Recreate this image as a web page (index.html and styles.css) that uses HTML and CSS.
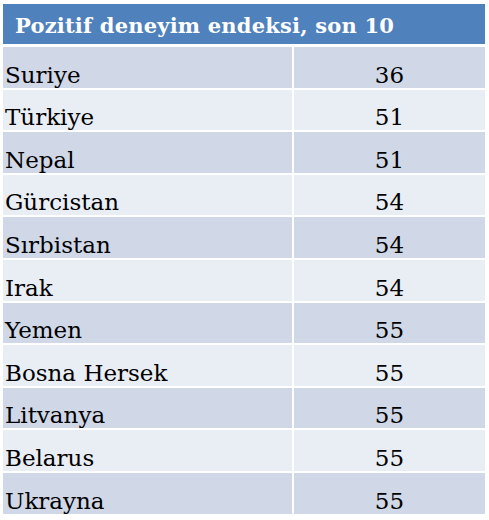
FILE: index.html
```html
<!DOCTYPE html>
<html lang="tr">
<head>
    <meta charset="UTF-8">
    <meta name="viewport" content="width=device-width, initial-scale=1.0">
    <title>Pozitif deneyim endeksi</title>
    <link rel="stylesheet" href="styles.css">
</head>
<body>
<table class="index-table">
    <colgroup>
        <col class="col-country">
        <col class="col-score">
    </colgroup>
    <thead>
        <tr>
            <th colspan="2">Pozitif deneyim endeksi, son 10</th>
        </tr>
    </thead>
    <tbody>
        <tr><td class="country">Suriye</td><td class="score">36</td></tr>
        <tr><td class="country">Türkiye</td><td class="score">51</td></tr>
        <tr><td class="country">Nepal</td><td class="score">51</td></tr>
        <tr><td class="country">Gürcistan</td><td class="score">54</td></tr>
        <tr><td class="country">Sırbistan</td><td class="score">54</td></tr>
        <tr><td class="country">Irak</td><td class="score">54</td></tr>
        <tr><td class="country">Yemen</td><td class="score">55</td></tr>
        <tr><td class="country">Bosna Hersek</td><td class="score">55</td></tr>
        <tr><td class="country">Litvanya</td><td class="score">55</td></tr>
        <tr><td class="country">Belarus</td><td class="score">55</td></tr>
        <tr><td class="country">Ukrayna</td><td class="score">55</td></tr>
    </tbody>
</table>
</body>
</html>
```

FILE: styles.css
```css
body {
    margin: 0;
    padding: 4px 0 0 3px;
    background-color: #fff;
    font-family: "DejaVu Serif", "Liberation Serif", serif;
}
.index-table {
    width: 482px;
    border-collapse: separate;
    border-spacing: 0;
    table-layout: fixed;
}
.col-country {
    width: 291px;
}
.col-score {
    width: 191px;
}
.index-table th {
    height: 41px;
    padding: 11px 0 0 12px;
    box-sizing: border-box;
    vertical-align: top;
    background-color: #4f81bd;
    color: #fff;
    font-size: 21px;
    letter-spacing: 0.2px;
    font-weight: bold;
    text-align: left;
    line-height: 1;
    border-bottom: 1px solid #fff;
}
.index-table td {
    padding: 16.6px 0 1px 0;
    font-size: 23px;
    line-height: 23px;
    color: #000;
    border-top: 2px solid #fff;
}
.index-table tbody tr:nth-child(odd) td {
    background-color: #d0d8e8;
}
.index-table tbody tr:nth-child(even) td {
    background-color: #e9edf4;
}
.country {
    padding-left: 2px !important;
    border-right: 2px solid #fff;
}
.score {
    text-align: center;
}
```
